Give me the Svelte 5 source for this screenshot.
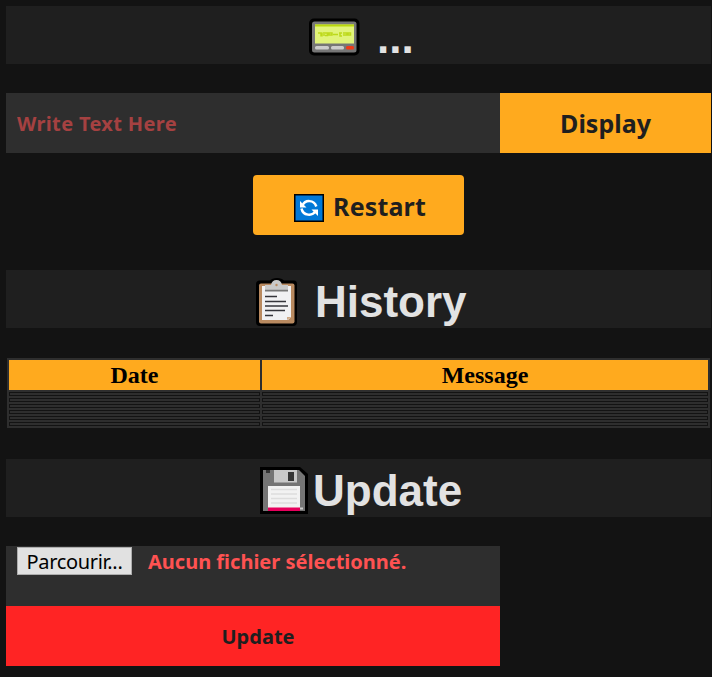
<script>
  const rows = [1, 2, 3, 4, 5, 6];
</script>

<main>
  <h1 class="title">
    <svg class="pager" width="52" height="38" viewBox="0 0 52 38">
      <rect x="0" y="0.500" width="50.500" height="37" rx="5" fill="#000" />
      <rect x="3" y="3.500" width="44.500" height="31" rx="2.500" fill="#767676" />
      <rect x="6" y="6.500" width="39" height="19" fill="#e1f37a" />
      <rect x="6" y="6.500" width="39" height="2" fill="#b9d70b" />
      <path d="M9 15h3v3.500M13 18.500v-4M15 14v4m1-3h2.500v2.500h-2.500M20 15h3v2h-3zM24 16.500h5M30 15h3M31 15v3h2M35 14v4m1-3h2v2h-2M39 15h2.500v2h-2.500z" fill="none" stroke="#bdd91b" stroke-width="1.500" />
      <rect x="6" y="28" width="14" height="3.500" rx="1.500" fill="#ccc" />
      <rect x="22" y="28" width="13" height="3.500" rx="1.500" fill="#ccc" />
      <rect x="37" y="28" width="8" height="3.500" rx="1.500" fill="#f03a17" />
    </svg>
    <span>...</span>
  </h1>

  <form class="message">
    <input type="text" placeholder="Write Text Here" aria-label="Message" />
    <button type="button"><span>Display</span></button>
  </form>

  <button type="button" class="restart">
    <svg width="30" height="28" viewBox="0 0 30 28">
      <rect width="30" height="28" fill="#000" />
      <rect x="1.500" y="1.500" width="27" height="25" fill="#0078d7" />
      <g fill="none" stroke="#fff" stroke-width="2.500">
        <path d="M8.500 11.500C11 5.500 20 5.500 22.300 12.500" />
        <path d="M7.500 14.500C9 22 18.500 22.500 21.500 17" />
      </g>
      <path d="M6 7v6.500h6.500zM17.500 15.500H24V22z" fill="#fff" />
    </svg>
    <span>Restart</span>
  </button>

  <h1 class="history">
    <svg width="42" height="50" viewBox="0 0 42 50">
      <path d="M4 2.500H14Q16 0 21 0T28 2.500H38Q41 2.500 41 6V44Q41 48 37 48H4Q0 48 0 44V6Q0 2.500 4 2.500Z" fill="#000" />
      <rect x="3" y="5.500" width="35.500" height="40" rx="2" fill="#b98a60" />
      <path d="M6 8H35V39L32 42H6Z" fill="#f1f1f3" />
      <path d="M31 42V39H35Z" fill="#cfa985" />
      <path d="M9 12.500H32" stroke="#777" stroke-width="2" />
      <path d="M9 7H15Q16 2 20.500 2T26 7H32V11H9Z" fill="#c9c9c9" />
      <circle cx="20.500" cy="7" r="1.200" fill="#b98a60" />
      <path d="M9 18.500H21M9 23.500H30M9 28H32M9 32.500H29M9 37.500H17" stroke="#35353b" stroke-width="1.600" />
    </svg>
    <span>History</span>
  </h1>

  <table>
    <thead><tr><th class="date">Date</th><th>Message</th></tr></thead>
    <tbody>
      {#each rows as row (row)}
        <tr><td></td><td></td></tr>
      {/each}
    </tbody>
  </table>

  <h1 class="update">
    <svg width="48" height="48" viewBox="0 0 48 48">
      <path d="M0 0H40L48 7V47H0Z" fill="#000" />
      <path d="M3 3H39L45 9V44H3Z" fill="#757575" />
      <rect x="6" y="3" width="4" height="3" fill="#333" />
      <rect x="14" y="3" width="23" height="12.500" fill="#c9c9c9" />
      <rect x="28" y="5" width="6" height="9" fill="#363636" />
      <rect x="8" y="19" width="32" height="22" fill="#f2f2f2" />
      <path d="M11 22.500H37M11 27H37M11 31.500H37M11 36H37" stroke="#ddd" stroke-width="1.500" />
      <rect x="8" y="40.500" width="32" height="3.500" fill="#e6005c" />
      <rect x="40" y="40.500" width="3" height="2" fill="#ccc" />
    </svg>
    <span>Update</span>
  </h1>

  <form class="upload">
    <div class="picker">
      <button type="button"><span>Parcourir...</span></button>
      <span class="status">Aucun fichier sélectionné.</span>
    </div>
    <button type="button" class="send"><span>Update</span></button>
  </form>
</main>

<style>
  :global(body) { margin: 0; background: #fff; }
  main { box-sizing: border-box; width: 712px; height: 677px; padding: 6px 0 0 6px; overflow: hidden; font-family: "Noto Sans", sans-serif; background: #131313; }
  h1 { display: flex; align-items: flex-start; box-sizing: border-box; width: 705px; height: 58px; margin: 0; background: #1f1f1f; color: #e2e2e2; font: bold 44px/64px "Liberation Sans", sans-serif; white-space: pre; }
  svg { display: block; flex: none; }
  .title { padding-left: 303px; }
  .title svg { margin: 12px 16px 0 0; }
  button { display: flex; align-items: center; justify-content: center; box-sizing: border-box; margin: 0; padding: 0; border: 0; color: #1f1f1f; background: #ffaa1e; font: bold 25px/34px "Noto Sans", sans-serif; }
  .message { display: flex; margin-top: 29px; height: 60px; }
  input { box-sizing: border-box; width: 494px; height: 60px; border: 0; padding: 0 11px 0; outline: 0; border-radius: 0; background: #2e2e2e; color: #ff5252; font: bold 20px/28px "Noto Sans", sans-serif; letter-spacing: 0.35px; }
  input::placeholder { color: #a54141; opacity: 1; }
  .message button { width: 211px; }
  .restart { width: 211px; height: 60px; margin: 22px 0 0 247px; border-radius: 4px; padding: 2px 0 0 3px; letter-spacing: 0.15px; }
  .restart svg { margin: 3px 9px 0 0; }
  .history { margin-top: 35px; padding-left: 250px; }
  .history svg { margin: 8px 17px 0 0; }
  table { width: 703px; margin: 30px 0 0 1px; table-layout: fixed; border-spacing: 2px; background: #2e2e2e; }
  th { height: 30px; padding: 0; background: #ffaa1e; color: #000; font: bold 24px/30px "Liberation Serif", serif; }
  .date { width: 251px; }
  td { box-sizing: border-box; height: 4px; padding: 1px; border: 1px solid #131313; }
  .update { margin-top: 31px; padding-left: 254px; }
  .update svg { margin: 8px 5px 0 0; }
  .upload { width: 494px; margin-top: 29px; }
  .picker { display: flex; align-items: flex-start; height: 60px; padding: 1px 0 0 11px; box-sizing: border-box; background: #2e2e2e; color: #ff5252; font: bold 20px/30px "Noto Sans", sans-serif; white-space: nowrap; }
  .picker button { width: 115px; height: 28px; padding-top: 1px; border: 1px solid #adadad; background: #e1e1e1; color: #000; font-weight: 400; font-size: 20px; line-height: 26px; letter-spacing: -0.33px; }
  .status { margin-left: 16px; }
  .send { width: 494px; height: 60px; padding: 2px 0 0 10px; background: #ff2424; font-size: 20px; }
</style>
